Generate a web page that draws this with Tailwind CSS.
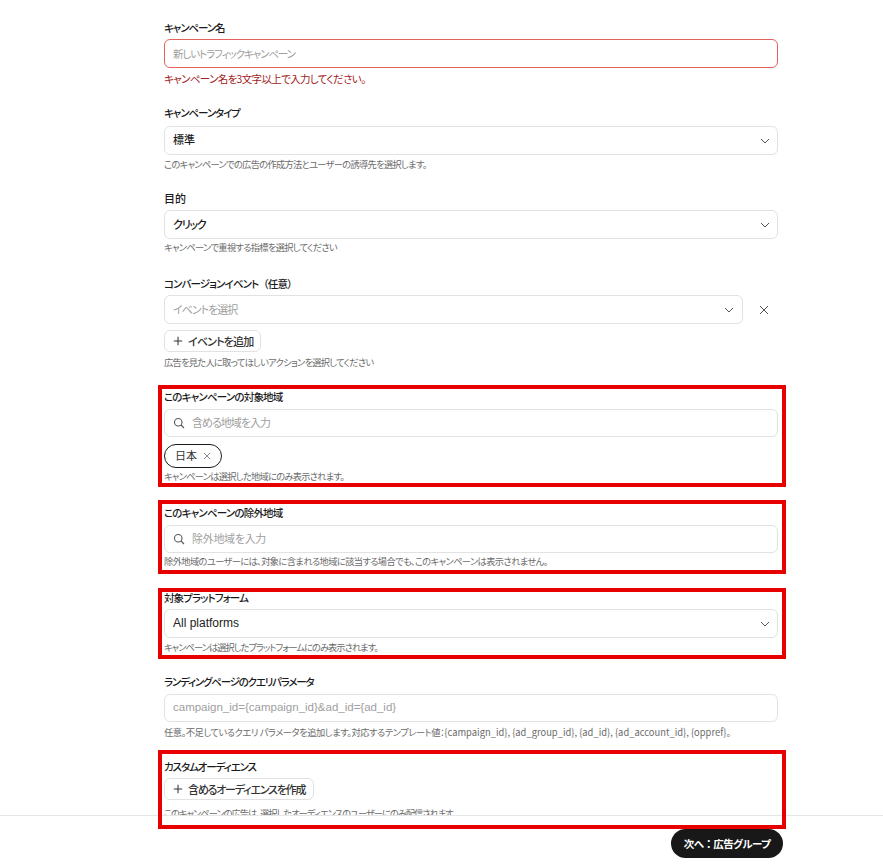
<!DOCTYPE html>
<html lang="ja">
<head>
  <meta charset="UTF-8" />
  <title>キャンペーン</title>
  <script src="https://cdn.jsdelivr.net/npm/@tailwindcss/browser@4"></script>
</head>
<body class="relative h-[866px] w-[883px] overflow-hidden bg-white font-['Noto_Sans_CJK_JP','Noto_Sans',sans-serif] [font-feature-settings:'palt'] text-[#1a1a1a]">

  <!-- Form -->
  <main class="h-[815px] overflow-hidden pl-[164px] pr-[105px] pt-[19px]">
    <!-- Campaign name -->
    <section class="h-[86px]">
      <label class="block h-[20px] text-[10.5px] leading-[18px] font-medium tracking-[-1.1px]">キャンペーン名</label>
      <div class="flex h-[29px] items-center rounded-md border border-[#e4605a] px-2 text-[10.5px] tracking-[-1.1px] text-[#a0a0a0]">新しいトラフィックキャンペーン</div>
      <p class="mt-[3px] text-[10.5px] leading-[16px] tracking-[-0.65px] text-[#a32222]">キャンペーン名を3文字以上で入力してください。</p>
    </section>

    <!-- Campaign type -->
    <section class="h-[85px]">
      <label class="block h-[21px] text-[10.5px] leading-[16px] font-medium tracking-[-1.1px]">キャンペーンタイプ</label>
      <div class="flex h-[29px] items-center justify-between rounded-md border border-[#e2e2e2] pl-2 pr-[6px] text-[11px] font-medium">
        <span class="pb-[2px]">標準</span>
        <svg class="h-3 w-3 text-[#555]" viewBox="0 0 24 24" fill="none" stroke="currentColor" stroke-width="2"><path d="m4 8 8 8 8-8" /></svg>
      </div>
      <p class="mt-[2px] text-[9.25px] leading-[14px] tracking-[-0.7px] text-[#6b6b6b]">このキャンペーンでの広告の作成方法とユーザーの誘導先を選択します。</p>
    </section>

    <!-- Objective -->
    <section class="h-[86px]">
      <label class="block h-[20px] text-[11px] leading-[16px] font-medium">目的</label>
      <div class="flex h-[29px] items-center justify-between rounded-md border border-[#e2e2e2] pl-2 pr-[6px] text-[11px] font-medium tracking-[-1.2px]">
        <span class="pb-[1px]">クリック</span>
        <svg class="h-3 w-3 text-[#555]" viewBox="0 0 24 24" fill="none" stroke="currentColor" stroke-width="2"><path d="m4 8 8 8 8-8" /></svg>
      </div>
      <p class="mt-[1px] text-[9.25px] leading-[14px] tracking-[-0.7px] text-[#6b6b6b]">キャンペーンで重視する指標を選択してください</p>
    </section>

    <!-- Conversion event -->
    <section class="h-[113px]">
      <label class="block h-[19px] text-[10.5px] leading-[16px] font-medium tracking-[-0.9px]">コンバージョンイベント<span class="[font-feature-settings:normal]">（任意）</span></label>
      <div class="flex items-center">
        <div class="flex h-[29px] w-[579px] items-center justify-between rounded-md border border-[#e2e2e2] pl-2 pr-[7px] text-[11px] tracking-[-1px] text-[#a0a0a0]">
          <span class="pb-[1px]">イベントを選択</span>
          <svg class="h-3 w-3 text-[#555]" viewBox="0 0 24 24" fill="none" stroke="currentColor" stroke-width="2"><path d="m4 8 8 8 8-8" /></svg>
        </div>
        <svg class="ml-[15px] h-3 w-3 text-[#555]" viewBox="0 0 24 24" fill="none" stroke="currentColor" stroke-width="2"><path d="M4 4l16 16M20 4 4 20" /></svg>
      </div>
      <button class="mt-[6px] flex h-[22px] items-center gap-[5px] rounded-md border border-[#e2e2e2] pl-[8px] pr-[7px] text-[11px] font-medium tracking-[-0.85px] text-[#333]">
        <svg class="h-[10px] w-[10px]" viewBox="0 0 24 24" fill="none" stroke="currentColor" stroke-width="2.5"><path d="M12 2v20M2 12h20" /></svg>
        イベントを追加
      </button>
      <p class="mt-[3px] text-[9.25px] leading-[14px] tracking-[-0.74px] text-[#6b6b6b]">広告を見た人に取ってほしいアクションを選択してください</p>
    </section>

    <!-- Target region -->
    <section class="h-[116px]">
      <label class="block h-[20px] text-[10.5px] leading-[16px] font-medium tracking-[-0.8px]">このキャンペーンの対象地域</label>
      <div class="flex h-[28px] items-center gap-[7px] rounded-md border border-[#e2e2e2] px-2 text-[11px] tracking-[-1px] text-[#a0a0a0]">
        <svg class="h-[12px] w-[12px] text-[#555]" viewBox="0 0 24 24" fill="none" stroke="currentColor" stroke-width="2.2"><circle cx="10.5" cy="10.5" r="7.5" /><path d="m16 16 6 6" /></svg>
        <span class="pb-[1px]">含める地域を入力</span>
      </div>
      <div class="mt-[7px] flex h-[24px] w-[58px] items-center justify-center gap-[6px] rounded-full border border-[#1a1a1a] pb-[1px] text-[11px] text-[#333]">
        日本
        <svg class="h-[8px] w-[8px] text-[#555]" viewBox="0 0 24 24" fill="none" stroke="currentColor" stroke-width="2"><path d="M3 3l18 18M21 3 3 21" /></svg>
      </div>
      <p class="mt-[1px] text-[9.25px] leading-[14px] tracking-[-0.74px] text-[#6b6b6b]">キャンペーンは選択した地域にのみ表示されます。</p>
    </section>

    <!-- Excluded region -->
    <section class="h-[85px]">
      <label class="block h-[20px] text-[10.5px] leading-[16px] font-medium tracking-[-0.8px]">このキャンペーンの除外地域</label>
      <div class="flex h-[28px] items-center gap-[7px] rounded-md border border-[#e2e2e2] px-2 text-[11px] tracking-[-0.3px] text-[#a0a0a0]">
        <svg class="h-[12px] w-[12px] text-[#555]" viewBox="0 0 24 24" fill="none" stroke="currentColor" stroke-width="2.2"><circle cx="10.5" cy="10.5" r="7.5" /><path d="m16 16 6 6" /></svg>
        <span class="pb-[1px]">除外地域を入力</span>
      </div>
      <p class="mt-[1px] text-[9.25px] leading-[14px] tracking-[-0.62px] text-[#6b6b6b]">除外地域のユーザーには、対象に含まれる地域に該当する場合でも、このキャンペーンは表示されません。</p>
    </section>

    <!-- Platform -->
    <section class="h-[84px]">
      <label class="block h-[19px] text-[10.5px] leading-[16px] font-medium tracking-[-0.9px]">対象プラットフォーム</label>
      <div class="flex h-[29px] items-center justify-between rounded-md border border-[#e2e2e2] pl-2 pr-[6px] font-['Liberation_Sans',sans-serif] text-[12px] text-[#222]">
        <span class="pb-[1px]">All platforms</span>
        <svg class="h-3 w-3 text-[#555]" viewBox="0 0 24 24" fill="none" stroke="currentColor" stroke-width="2"><path d="m4 8 8 8 8-8" /></svg>
      </div>
      <p class="mt-[2px] text-[9.25px] leading-[14px] tracking-[-0.97px] text-[#6b6b6b]">キャンペーンは選択したプラットフォームにのみ表示されます。</p>
    </section>

    <!-- Query params -->
    <section class="h-[85px]">
      <label class="block h-[20px] text-[10.5px] leading-[16px] font-medium tracking-[-1.2px]">ランディングページのクエリパラメータ</label>
      <div class="flex h-[28px] items-center rounded-md border border-[#e2e2e2] px-2 pb-[1px] font-['Liberation_Sans',sans-serif] text-[11.5px] text-[#a0a0a0]">campaign_id={campaign_id}&amp;ad_id={ad_id}</div>
      <p class="mt-[3px] text-[9.25px] leading-[14px] text-[#6b6b6b]"><span class="tracking-[-0.45px]">任意。不足しているクエリ パラメータを追加します。対応するテンプレート値：</span><span class="text-[9.4px]">{campaign_id}, {ad_group_id}, {ad_id}, {ad_account_id}, {oppref}。</span></p>
    </section>

    <!-- Custom audience -->
    <section>
      <label class="block h-[19px] text-[10.5px] leading-[16px] font-medium tracking-[-1.1px]">カスタムオーディエンス</label>
      <button class="flex h-[22px] items-center gap-[5px] rounded-md border border-[#e2e2e2] pl-[8px] pr-[8px] text-[11px] font-medium tracking-[-1.2px] text-[#333]">
        <svg class="h-[10px] w-[10px]" viewBox="0 0 24 24" fill="none" stroke="currentColor" stroke-width="2.5"><path d="M12 2v20M2 12h20" /></svg>
        含めるオーディエンスを作成
      </button>
      <p class="mt-[6px] text-[9.25px] leading-[14px] tracking-[-1px] text-[#6b6b6b]">このキャンペーンの広告は、選択したオーディエンスのユーザーにのみ配信されます。</p>
    </section>
  </main>

  <!-- Footer -->
  <footer class="flex h-[51px] justify-end border-t border-[#e6e6e6] pr-[100px] pt-[13px]">
    <button class="h-[29px] w-[112px] rounded-full bg-[#181818] text-[10.5px] font-bold tracking-[-0.6px] text-white">次へ<span class="[font-feature-settings:normal]">：</span>広告グループ</button>
  </footer>

  <!-- Red annotation boxes -->
  <div class="absolute left-[158px] top-[385px] h-[102px] w-[628px] border-4 border-[#e60000]"></div>
  <div class="absolute left-[158px] top-[500px] h-[74px] w-[628px] border-4 border-[#e60000]"></div>
  <div class="absolute left-[158px] top-[588px] h-[71px] w-[628px] border-4 border-[#e60000]"></div>
  <div class="absolute left-[158px] top-[750px] h-[79px] w-[628px] border-4 border-[#e60000]"></div>
</body>
</html>
